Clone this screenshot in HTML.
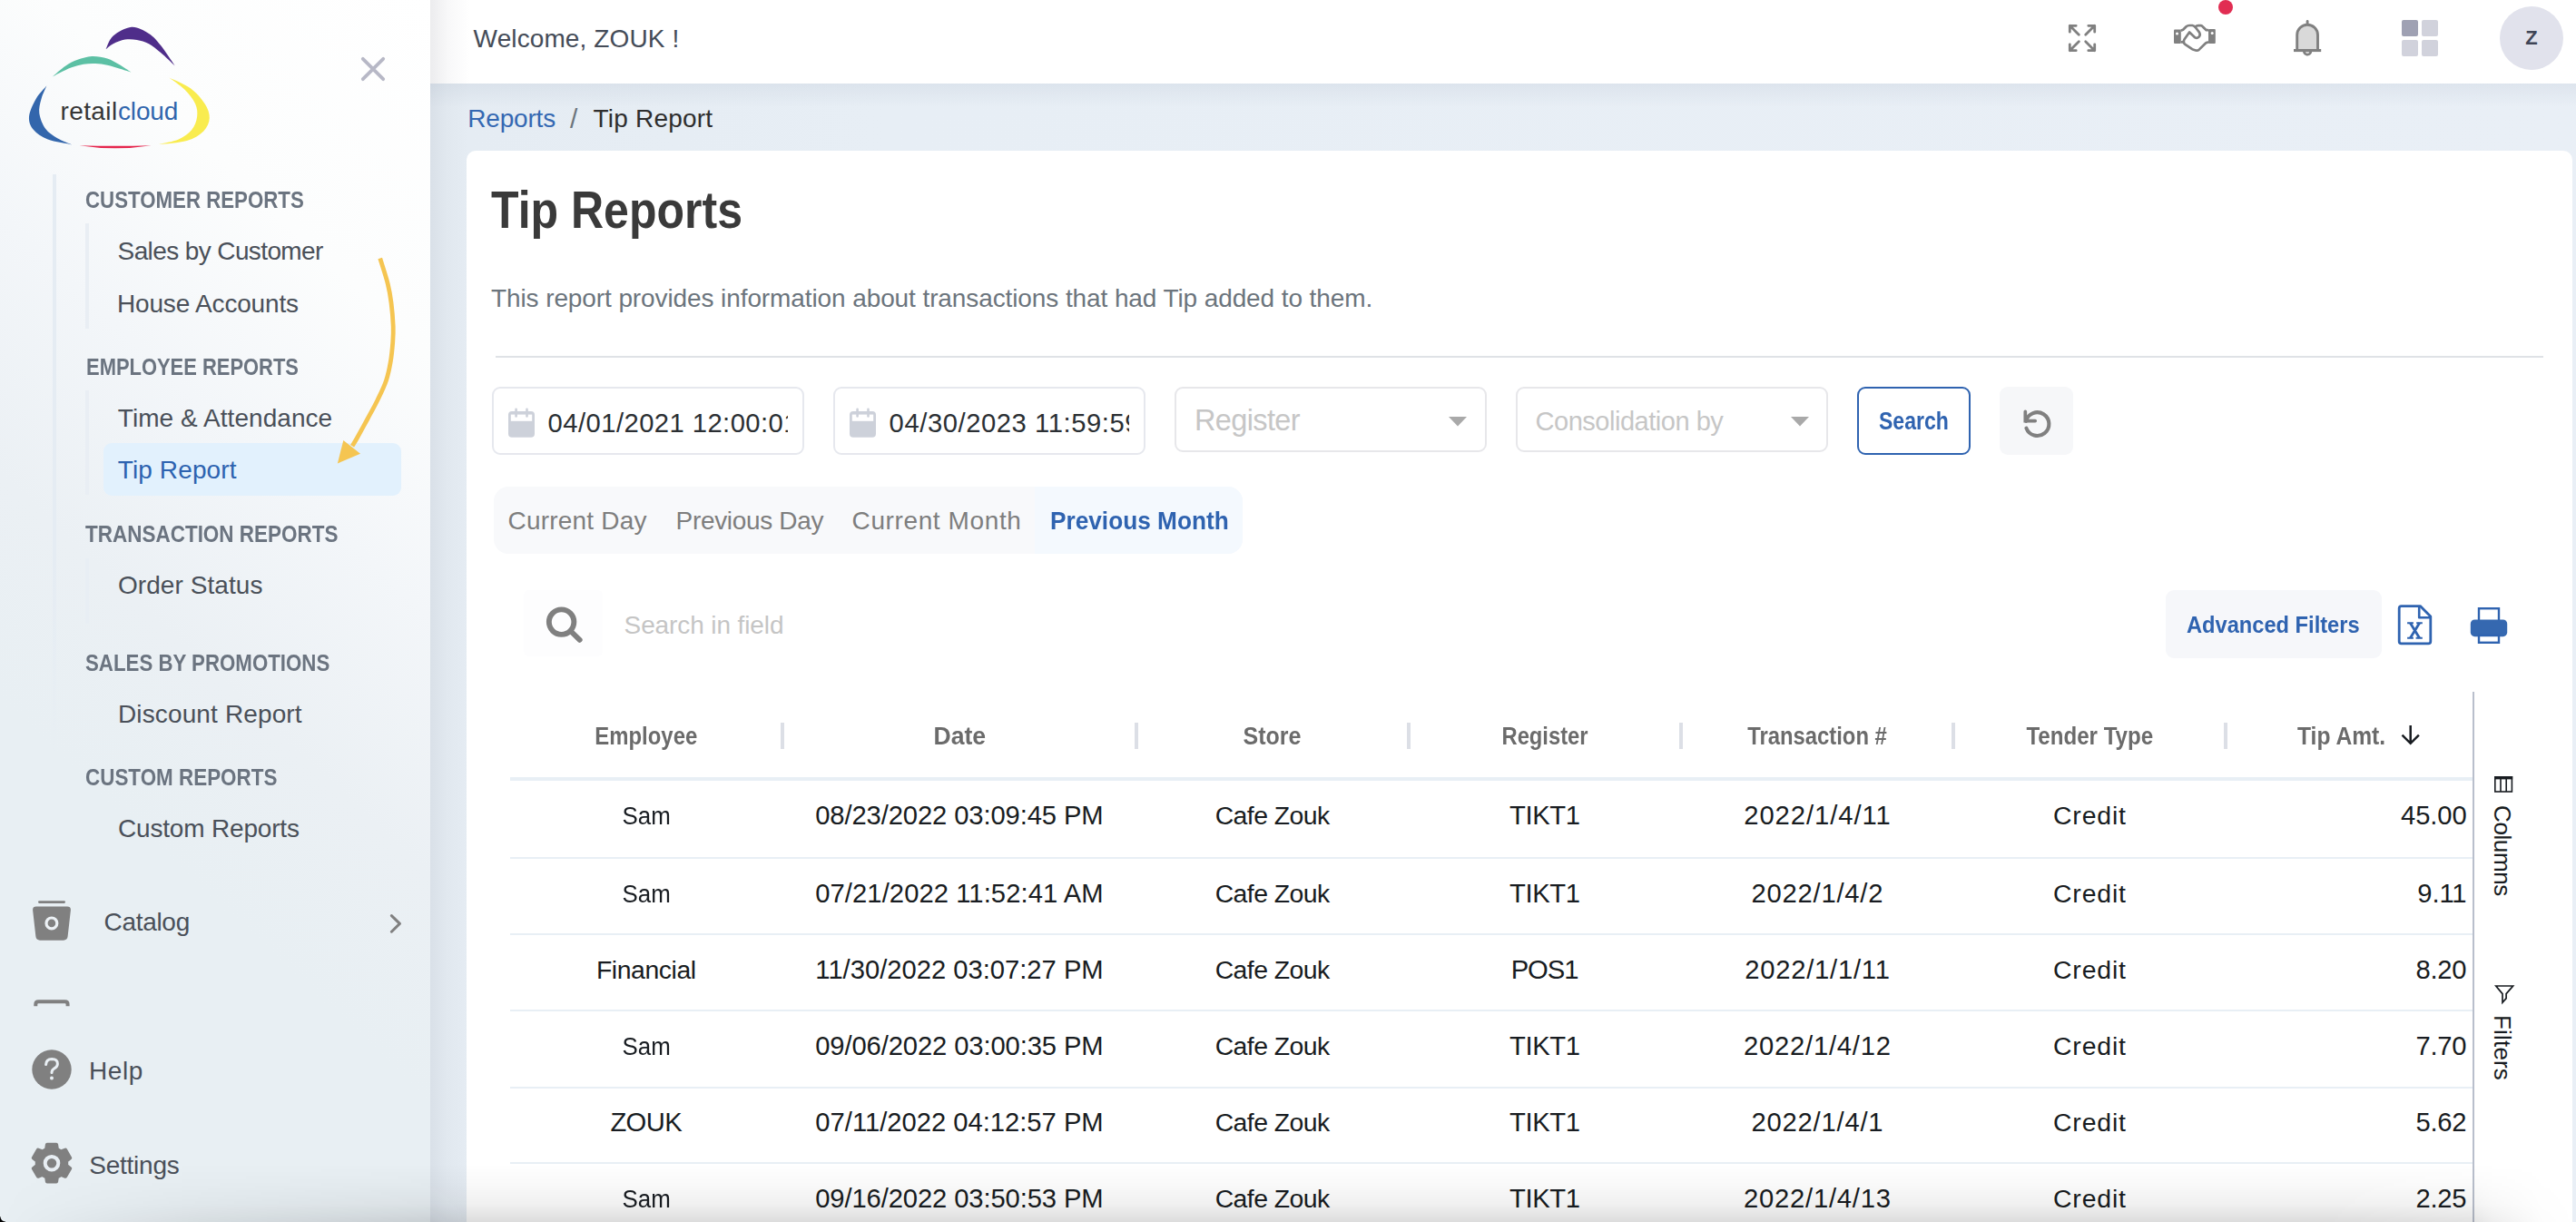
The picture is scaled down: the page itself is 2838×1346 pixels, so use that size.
<!DOCTYPE html>
<html lang="en">
<head>
<meta charset="utf-8">
<title>Tip Reports</title>
<style>
*{box-sizing:border-box;margin:0;padding:0}
html,body{width:2838px;height:1346px;overflow:hidden}
body{position:relative;font-family:"Liberation Sans",sans-serif;background:#e5ebf3;color:#181c21}
.t{position:absolute;white-space:nowrap;display:block}
.abs{position:absolute}
svg{position:absolute;display:block;overflow:visible}

/* ---------- main background / breadcrumb strip ---------- */
#main{position:absolute;left:474px;top:92px;width:2364px;height:1254px;
  background:linear-gradient(90deg,#d9e0e8 0,#e1e8ef 18px,#e5ecf3 42px,#e7eef5 500px,#e9eff6 100%)}
#main:before{content:"";position:absolute;left:0;top:0;width:100%;height:26px;
  background:linear-gradient(180deg,rgba(120,135,160,.10),rgba(120,135,160,0))}

/* ---------- top bar ---------- */
#top{position:absolute;left:474px;top:0;width:2364px;height:92px;background:#fff}
#top:before{content:"";position:absolute;left:0;top:0;width:44px;height:92px;
  background:linear-gradient(90deg,#ececee 0,#f8f8f9 45%,#fff 100%)}
.dot{position:absolute;left:1970px;top:0;width:16px;height:16px;border-radius:50%;background:#e12d52}
.avatar{position:absolute;left:2280px;top:7px;width:70px;height:70px;border-radius:50%;background:#e1e2ec}
.grid i{position:absolute;width:18px;height:18px;border-radius:2px;background:#d1d2dc}

/* ---------- sidebar ---------- */
#side{position:absolute;left:0;top:0;width:474px;height:1346px;
  background:linear-gradient(223deg,#ffffff 0%,#fcfdfd 22%,#f3f6f9 38%,#ebf0f4 54%,#e8eff3 68%,#e8eff3 100%)}
.vline{position:absolute;background:#e5ecf3}
.hl{position:absolute;left:114px;top:488.4px;width:328px;height:57.3px;border-radius:9px;background:#e2f1fd}

/* ---------- card ---------- */
#card{position:absolute;left:514px;top:166px;width:2320px;height:1300px;background:#fff;border-radius:10px}
.hr{position:absolute;left:32px;top:226px;width:2256px;height:2px;background:#dfe2e6}
.inp{position:absolute;top:260px;height:75px;border:2px solid #e6e8ee;border-radius:9px;background:#fff;overflow:hidden}
.sel{position:absolute;top:260px;height:72px;border:2px solid #e7e7ea;border-radius:9px;background:#fff}
.btn{position:absolute;left:1532px;top:260px;width:125px;height:75.4px;border:2px solid #2f63b0;border-radius:9px;background:#fff}
.rst{position:absolute;left:1689px;top:260px;width:81px;height:75.4px;border-radius:9px;background:#f6f7f9}
.tabs{position:absolute;left:30px;top:370px;width:825px;height:74px;border-radius:16px;background:#f8f9fb;overflow:hidden}
.tabs b{position:absolute;left:596px;top:0;width:229px;height:74px;background:#f4f9fe;display:block}
.sbox{position:absolute;left:63px;top:484px;width:87px;height:73px;background:#fdfdfe;border-radius:6px}
.adv{position:absolute;left:1872px;top:484px;width:238px;height:75px;border-radius:9px;background:#f6f7fa}

/* table */
.sep{position:absolute;top:630px;width:4px;height:29px;background:#dcdfe6}
.hb{position:absolute;left:48px;top:690px;width:2162px;height:4px;background:#e8eff5}
.rb{position:absolute;left:48px;width:2162px;height:2px;background:#e8eff5}
.sideline{position:absolute;left:2210px;top:596px;width:2px;height:760px;background:#b9bfcc}
.rot{position:absolute;transform-origin:0 0;transform:rotate(90deg);white-space:nowrap}

/* bottom shade */
#shade{position:absolute;left:0;top:1282px;width:2838px;height:64px;pointer-events:none;
  background:linear-gradient(180deg,rgba(0,0,0,0) 0,rgba(0,0,0,.022) 35%,rgba(0,0,0,.06) 70%,rgba(0,0,0,.135) 100%);
  -webkit-mask-image:linear-gradient(90deg,rgba(0,0,0,0) 0,rgba(0,0,0,.55) 220px,#000 520px,#000 2560px,rgba(0,0,0,.82) 2724px,rgba(0,0,0,.5) 2745px,rgba(0,0,0,.08) 2800px,rgba(0,0,0,0) 2838px);
  mask-image:linear-gradient(90deg,rgba(0,0,0,0) 0,rgba(0,0,0,.55) 220px,#000 520px,#000 2560px,rgba(0,0,0,.82) 2724px,rgba(0,0,0,.5) 2745px,rgba(0,0,0,.08) 2800px,rgba(0,0,0,0) 2838px)}
#corner{position:absolute;left:0;top:1340px;width:6px;height:6px;
  background:radial-gradient(circle at 100% 0,rgba(0,0,0,0) 0,rgba(0,0,0,0) 5px,#000 6px)}

</style>
</head>
<body>
<!-- ======================= MAIN BACKGROUND + BREADCRUMB ======================= -->
<div id="main">
  <nav class="crumb">
    <span class="t" style="top:22px;font-size:28px;line-height:33px;color:#3468b2;letter-spacing:-0.17px;left:41.2px;"><span>Reports</span></span>
    <span class="t" style="top:21px;font-size:30px;line-height:35px;color:#6c757d;left:154.0px;"><span>/</span></span>
    <span class="t" style="top:22px;font-size:28px;line-height:33px;color:#2e2e2e;letter-spacing:0.19px;left:179.6px;"><span>Tip Report</span></span>
  </nav>
</div>

<!-- ======================= TOP BAR ======================= -->
<header id="top">
  <span class="t" style="top:26px;font-size:28px;line-height:33px;color:#454c58;letter-spacing:0.11px;left:47.6px;"><span>Welcome, ZOUK !</span></span>

  <!-- fullscreen / expand -->
  <svg style="left:1805px;top:27px" width="30" height="30" viewBox="0 0 30 30" fill="none" stroke="#808080" stroke-width="2.8" stroke-linejoin="round" stroke-linecap="round">
    <path d="M1.3 8.2V1.3H8.2M1.3 1.3L11.3 11.3"/>
    <path d="M28.7 8.2V1.3H21.8M28.7 1.3L18.7 11.3"/>
    <path d="M1.3 21.8V28.7H8.2M1.3 28.7L11.3 18.7"/>
    <path d="M28.7 21.8V28.7H21.8M28.7 28.7L18.7 18.7"/>
  </svg>

  <!-- handshake -->
  <svg style="left:1921px;top:27px" width="46" height="30" viewBox="0 0 46 30" fill="none">
    <rect x="0" y="5.4" width="7.8" height="15.6" rx="1" fill="#808080"/>
    <rect x="38" y="5" width="7.8" height="16" rx="1" fill="#808080"/>
    <circle cx="3.5" cy="9.9" r="1.5" fill="#fff"/>
    <circle cx="42.2" cy="9.6" r="1.5" fill="#fff"/>
    <path d="M7.8 6.6 L10.1 5.8 L13.6 2.2 Q15 1 17 1 L20.4 1 Q22 1.3 23.3 2.5 Q25 1.2 27 1.2 L29.8 1.2 Q30.8 1.3 31.6 2.2 L35.7 6.2 L38 6.2" stroke="#808080" stroke-width="2.7" stroke-linejoin="round"/>
    <path d="M38 19.4 L35.3 20.2 L28 27.4 Q26.2 29 24 28.5 L20.2 27.2 L12 21.6 Q10.9 20.6 10.9 19.4 L7.8 19.4" stroke="#808080" stroke-width="2.7" stroke-linejoin="round"/>
    <path d="M23.3 2.5 L28 8.6 Q29.6 11.3 27.6 13.6 Q25.6 15.6 23.4 14.4 L17.1 8.5 L11.6 16.2 Q10.6 17.6 10.9 19.4" stroke="#808080" stroke-width="2.7" stroke-linejoin="round" stroke-linecap="round"/>
  </svg>
  <i class="dot"></i>

  <!-- bell -->
  <svg style="left:2052.9px;top:21.8px" width="31" height="41" viewBox="0 0 31 41">
    <path d="M10 34.5 A5.1 5.1 0 0 0 20.2 34.5 Z" fill="#808080"/>
    <path d="M12.9 34.8 A2.2 2.2 0 0 0 17.3 34.8 Z" fill="#dcdcdc"/>
    <path d="M3.7 33.5 V16.6 A11.4 11.4 0 0 1 26.5 16.6 V33.5 Z" fill="#d9d9d9" stroke="#808080" stroke-width="2.9"/>
    <path d="M15.1 1.4 V5" stroke="#808080" stroke-width="2.9" stroke-linecap="round"/>
    <rect x="0" y="32" width="30.2" height="3.1" fill="#808080"/>
  </svg>

  <!-- app grid -->
  <div class="grid">
    <i style="left:2171.9px;top:21.9px;background:#9fa1b3"></i>
    <i style="left:2194px;top:21.9px"></i>
    <i style="left:2171.9px;top:44px"></i>
    <i style="left:2194px;top:44px"></i>
  </div>

  <div class="avatar"></div>
  <span class="t" style="top:28px;font-size:22px;line-height:27px;color:#3f4556;font-weight:700;left:1815.0px;width:1000px;text-align:center;"><span>Z</span></span>
</header>

<!-- ======================= SIDEBAR ======================= -->
<aside id="side">
  <svg style="left:0;top:0" width="260" height="180" viewBox="0 0 260 180"><path d="M116.60,54.30 C117.95,51.85 119.97,43.68 124.70,39.60 C129.43,35.52 138.45,30.23 145.00,29.80 C151.55,29.37 158.65,33.62 164.00,37.00 C169.35,40.38 172.33,44.20 177.10,50.10 C181.87,56.00 190.02,68.68 192.60,72.40 L192.60,72.40 C190.02,70.00 181.87,62.03 177.10,58.00 C172.33,53.97 168.37,50.53 164.00,48.20 C159.63,45.87 155.27,44.77 150.90,44.00 C146.53,43.23 142.17,42.90 137.80,43.60 C133.43,44.30 128.23,46.42 124.70,48.20 C121.17,49.98 117.95,53.28 116.60,54.30 Z" fill="#4f2d8a"/><path d="M57.30,84.80 C59.82,82.73 67.70,75.57 72.40,72.40 C77.10,69.23 80.70,67.55 85.50,65.80 C90.30,64.05 95.75,62.12 101.20,61.90 C106.65,61.68 113.18,62.97 118.20,64.50 C123.22,66.03 126.93,68.58 131.30,71.10 C135.67,73.62 142.22,78.18 144.40,79.60 L144.40,79.60 C142.22,78.93 135.67,76.92 131.30,75.60 C126.93,74.28 122.57,72.62 118.20,71.70 C113.83,70.78 109.47,70.25 105.10,70.10 C100.73,69.95 96.37,70.10 92.00,70.80 C87.63,71.50 83.27,72.73 78.90,74.30 C74.53,75.87 69.40,78.45 65.80,80.20 C62.20,81.95 58.72,84.03 57.30,84.80 Z" fill="#5cc0a4"/><path d="M51.40,94.60 C49.43,97.00 42.83,103.32 39.60,109.00 C36.37,114.68 32.43,123.02 32.00,128.70 C31.57,134.38 33.55,138.95 37.00,143.10 C40.45,147.25 45.60,150.88 52.70,153.60 C59.80,156.32 75.12,158.43 79.60,159.40 L79.60,159.40 C76.87,158.20 68.12,155.13 63.20,152.20 C58.28,149.27 53.42,146.38 50.10,141.80 C46.78,137.22 44.07,130.17 43.30,124.70 C42.53,119.23 44.15,114.02 45.50,109.00 C46.85,103.98 50.42,97.00 51.40,94.60 Z" fill="#3366ac"/><path d="M186.30,85.50 C190.23,87.47 203.35,92.50 209.90,97.30 C216.45,102.10 222.12,108.85 225.60,114.30 C229.08,119.75 231.02,124.98 230.80,130.00 C230.58,135.02 228.45,140.25 224.30,144.40 C220.15,148.55 214.08,152.47 205.90,154.90 C197.72,157.33 180.32,158.32 175.20,159.00 L175.20,159.00 C178.80,158.10 190.80,156.25 196.80,153.60 C202.80,150.95 207.82,147.25 211.20,143.10 C214.58,138.95 216.45,133.50 217.10,128.70 C217.75,123.90 217.40,119.32 215.10,114.30 C212.80,109.28 208.10,103.40 203.30,98.60 C198.50,93.80 189.13,87.68 186.30,85.50 Z" fill="#f9ec4f"/><path d="M87.4,160.2 Q127,161.4 166.6,160.2 Q127,166.4 87.4,160.2 Z" fill="#e5254c"/></svg>
  <span class="t" style="top:106px;font-size:28px;line-height:33px;color:#363636;letter-spacing:0.43px;left:66.4px;"><span>retail</span></span>
  <span class="t" style="top:106px;font-size:28px;line-height:33px;color:#3166ad;letter-spacing:-0.15px;left:130.0px;"><span>cloud</span></span>

  <svg style="left:398px;top:63px" width="26" height="26" viewBox="0 0 26 26"><path d="M1.8 1.8L24.2 24.2M24.2 1.8L1.8 24.2" stroke="#b7b8c6" stroke-width="3.8" stroke-linecap="round"/></svg>

  <i class="vline" style="left:58.4px;top:192px;width:3.2px;height:640px;background:linear-gradient(180deg,#e5ecf3 0,#e5ecf3 420px,rgba(229,236,243,0) 100%)"></i>
  <i class="vline" style="left:94.3px;top:246px;width:3.6px;height:116px;background:#e9eef4"></i>
  <i class="vline" style="left:94.3px;top:430.4px;width:3.6px;height:115px;background:#e9eef4"></i>
  <i class="vline" style="left:94.3px;top:614.7px;width:3.6px;height:72.7px;background:#e8eef4"></i>
  <i class="hl"></i>

  <span class="t" style="top:204px;font-size:26px;line-height:32px;color:#6b7480;font-weight:700;left:93.6px;"><span style="display:inline-block;transform:scaleX(0.8562);transform-origin:0 50%">CUSTOMER REPORTS</span></span>
  <span class="t" style="top:260px;font-size:28px;line-height:33px;color:#4a5059;letter-spacing:-0.61px;left:129.6px;"><span>Sales by Customer</span></span>
  <span class="t" style="top:318px;font-size:28px;line-height:33px;color:#4a5059;letter-spacing:-0.18px;left:129.0px;"><span>House Accounts</span></span>
  <span class="t" style="top:388px;font-size:26px;line-height:32px;color:#6b7480;font-weight:700;left:94.5px;"><span style="display:inline-block;transform:scaleX(0.8434);transform-origin:0 50%">EMPLOYEE REPORTS</span></span>
  <span class="t" style="top:444px;font-size:28px;line-height:33px;color:#4a5059;letter-spacing:0.05px;left:129.8px;"><span>Time &amp; Attendance</span></span>
  <span class="t" style="top:501px;font-size:28px;line-height:33px;color:#2d63b0;letter-spacing:0.11px;left:129.8px;"><span>Tip Report</span></span>
  <span class="t" style="top:572px;font-size:26px;line-height:32px;color:#6b7480;font-weight:700;left:93.8px;"><span style="display:inline-block;transform:scaleX(0.8646);transform-origin:0 50%">TRANSACTION REPORTS</span></span>
  <span class="t" style="top:628px;font-size:28px;line-height:33px;color:#4a5059;letter-spacing:0.06px;left:130.0px;"><span>Order Status</span></span>
  <span class="t" style="top:714px;font-size:26px;line-height:32px;color:#6b7480;font-weight:700;left:94.1px;"><span style="display:inline-block;transform:scaleX(0.8563);transform-origin:0 50%">SALES BY PROMOTIONS</span></span>
  <span class="t" style="top:770px;font-size:28px;line-height:33px;color:#4a5059;letter-spacing:0.13px;left:130.0px;"><span>Discount Report</span></span>
  <span class="t" style="top:840px;font-size:26px;line-height:32px;color:#6b7480;font-weight:700;left:93.9px;"><span style="display:inline-block;transform:scaleX(0.8624);transform-origin:0 50%">CUSTOM REPORTS</span></span>
  <span class="t" style="top:896px;font-size:28px;line-height:33px;color:#4a5059;letter-spacing:-0.18px;left:130.0px;"><span>Custom Reports</span></span>

  <!-- annotation arrow -->
  <svg style="left:340px;top:270px" width="134" height="260" viewBox="340 270 134 260">
    <path d="M418.72,284.47 C420.14,289.15 425.18,304.33 427.23,312.55 C429.29,320.78 430.07,326.03 431.06,333.83 C432.06,341.63 432.91,352.27 433.19,359.36 C433.48,366.45 433.23,370.00 432.77,376.38 C432.30,382.77 431.63,390.57 430.43,397.66 C429.22,404.75 427.91,411.84 425.53,418.94 C423.16,426.03 419.61,433.12 416.17,440.21 C412.73,447.30 408.72,454.40 404.89,461.49 C401.06,468.58 395.99,477.80 393.19,482.77 C390.39,487.73 388.94,489.86 388.09,491.28" fill="none" stroke="#f5c551" stroke-width="4.8" stroke-linecap="butt"/>
    <path d="M371.9 510.4 L378.3 484.9 L397 499.8 Z" fill="#f5c551"/>
  </svg>

  <!-- catalog -->
  <svg style="left:30px;top:985px" width="60" height="60" viewBox="30 985 60 60">
    <path d="M43.3 993.6 H70.7" stroke="#808080" stroke-width="2.6" stroke-linecap="round"/>
    <path d="M40 998.6 H74 Q78.2 998.6 77.9 1002.6 L74.6 1031.6 Q74.2 1035.7 70 1035.7 H44 Q39.8 1035.7 39.4 1031.6 L36.1 1002.6 Q35.8 998.6 40 998.6 Z" fill="#808080"/>
    <circle cx="56.9" cy="1016.9" r="5.9" fill="none" stroke="#ecf1f5" stroke-width="3.2"/>
  </svg>
  <span class="t" style="top:999px;font-size:28px;line-height:33px;color:#4a5059;letter-spacing:-0.30px;left:114.5px;"><span>Catalog</span></span>
  <svg style="left:425px;top:1003px" width="24" height="30" viewBox="425 1003 24 30"><path d="M431.4 1008.6 L440.4 1017.4 L431.4 1026.2" fill="none" stroke="#808080" stroke-width="3" stroke-linecap="round" stroke-linejoin="round"/></svg>

  <!-- clipped next item icon -->
  <svg style="left:30px;top:1095px" width="60" height="14" viewBox="30 1095 60 14"><path d="M39.3 1108.2 V1106.2 Q39.3 1103.2 42.3 1103.2 H71.6 Q74.6 1103.2 74.6 1106.2 V1108.2" fill="none" stroke="#808080" stroke-width="4"/></svg>

  <!-- help -->
  <svg style="left:30px;top:1150px" width="60" height="56" viewBox="30 1150 60 56">
    <circle cx="57" cy="1178" r="21.7" fill="#808080"/>
    <path d="M50.6 1172.6 Q50.8 1166.4 57.2 1166.4 Q63.6 1166.6 63.4 1172 Q63.2 1175.4 59.4 1177.2 Q57 1178.6 57 1181.6" fill="none" stroke="#e9eff4" stroke-width="3.0" stroke-linecap="round"/>
    <circle cx="57" cy="1187.6" r="2.0" fill="#e9eff4"/>
  </svg>
  <span class="t" style="top:1163px;font-size:28px;line-height:33px;color:#4a5059;letter-spacing:0.55px;left:98.0px;"><span>Help</span></span>

  <!-- settings -->
  <svg style="left:30px;top:1253px" width="60" height="58" viewBox="30 1253 60 58">
    <path d="M51.12,1265.89 L51.88,1260.83 L62.12,1260.83 L62.88,1265.89 L67.32,1268.45 L72.08,1266.59 L77.20,1275.45 L73.20,1278.63 L73.20,1283.77 L77.20,1286.95 L72.08,1295.81 L67.32,1293.95 L62.88,1296.51 L62.12,1301.57 L51.88,1301.57 L51.12,1296.51 L46.68,1293.95 L41.92,1295.81 L36.80,1286.95 L40.80,1283.77 L40.80,1278.63 L36.80,1275.45 L41.92,1266.59 L46.68,1268.45 Z" fill="#808080" stroke="#808080" stroke-width="4" stroke-linejoin="round"/>
    <circle cx="57" cy="1281.2" r="7.3" fill="none" stroke="#e8eef3" stroke-width="4"/>
  </svg>
  <span class="t" style="top:1267px;font-size:28px;line-height:33px;color:#4a5059;letter-spacing:-0.22px;left:98.2px;"><span>Settings</span></span>
</aside>

<!-- ======================= CARD ======================= -->
<section id="card">
  <span class="t" style="top:32px;font-size:58px;line-height:66px;color:#3a3a3a;font-weight:700;left:26.6px;"><span style="display:inline-block;transform:scaleX(0.8624);transform-origin:0 50%">Tip Reports</span></span>
  <span class="t" style="top:146px;font-size:28px;line-height:33px;color:#6c757d;letter-spacing:-0.10px;left:27.0px;"><span>This report provides information about transactions that had Tip added to them.</span></span>
  <i class="hr"></i>

  <!-- date from -->
  <div class="inp" style="left:28px;width:344px">
    <svg style="left:16px;top:22px" width="30" height="33" viewBox="0 0 30 33">
      <rect x="0" y="3.1" width="29" height="28.6" rx="4" fill="#cdd1da"/>
      <rect x="2.8" y="6.6" width="23.4" height="7.2" fill="#fff"/>
      <path d="M8.6 0.8 V8.4 M20.5 0.8 V8.4" stroke="#cdd1da" stroke-width="2.6" stroke-linecap="round"/>
    </svg>
    <div class="abs" style="left:58px;top:0;width:266px;height:72px;overflow:hidden">
      <span class="t" style="top:21px;font-size:29.2px;line-height:34px;color:#2b2f33;letter-spacing:0.45px;left:1.6px;"><span>04/01/2021 12:00:01</span></span>
    </div>
  </div>
  <!-- date to -->
  <div class="inp" style="left:404px;width:344px">
    <svg style="left:16px;top:22px" width="30" height="33" viewBox="0 0 30 33">
      <rect x="0" y="3.1" width="29" height="28.6" rx="4" fill="#cdd1da"/>
      <rect x="2.8" y="6.6" width="23.4" height="7.2" fill="#fff"/>
      <path d="M8.6 0.8 V8.4 M20.5 0.8 V8.4" stroke="#cdd1da" stroke-width="2.6" stroke-linecap="round"/>
    </svg>
    <div class="abs" style="left:58px;top:0;width:266px;height:72px;overflow:hidden">
      <span class="t" style="top:21px;font-size:29.2px;line-height:34px;color:#2b2f33;letter-spacing:0.57px;left:1.6px;"><span>04/30/2023 11:59:59</span></span>
    </div>
  </div>

  <!-- register select -->
  <div class="sel" style="left:780px;width:343.5px">
    <span class="t" style="top:16px;font-size:32.5px;line-height:38px;color:#c6c6c6;letter-spacing:-0.63px;left:20.0px;"><span>Register</span></span>
    <svg style="left:300.4px;top:30.9px" width="20" height="11" viewBox="0 0 20 11"><path d="M0 0 H20 L10 10.4 Z" fill="#a9a9a9"/></svg>
  </div>
  <!-- consolidation select -->
  <div class="sel" style="left:1155.5px;width:344px">
    <span class="t" style="top:19px;font-size:29px;line-height:34px;color:#c6c6c6;letter-spacing:-0.47px;left:20.0px;"><span>Consolidation by</span></span>
    <svg style="left:301.4px;top:30.9px" width="20" height="11" viewBox="0 0 20 11"><path d="M0 0 H20 L10 10.4 Z" fill="#a9a9a9"/></svg>
  </div>

  <div class="btn"><span class="t" style="top:20px;font-size:27px;line-height:32px;color:#2f63b0;font-weight:700;left:22.0px;"><span style="display:inline-block;transform:scaleX(0.8532);transform-origin:0 50%">Search</span></span></div>
  <div class="rst">
    <svg style="left:0.8px;top:0.3px" width="81" height="75" viewBox="0 0 81 75" fill="none" stroke="#808080" stroke-width="4.1">
      <path d="M28.0 37.8 A12.9 12.9 0 1 1 28.4 45.6" stroke-linecap="round"/>
      <path d="M27.3 27.4 V37.6 H38.2" stroke-linecap="round" stroke-linejoin="miter" stroke-width="3.7"/>
    </svg>
  </div>

  <!-- quick ranges -->
  <div class="tabs"><b></b>
    <span class="t" style="top:21px;font-size:28px;line-height:33px;color:#7e7e7e;letter-spacing:0.19px;left:15.6px;"><span>Current Day</span></span>
    <span class="t" style="top:21px;font-size:28px;line-height:33px;color:#7e7e7e;letter-spacing:-0.33px;left:200.6px;"><span>Previous Day</span></span>
    <span class="t" style="top:21px;font-size:28px;line-height:33px;color:#7e7e7e;letter-spacing:0.61px;left:394.6px;"><span>Current Month</span></span>
    <span class="t" style="top:21px;font-size:28px;line-height:33px;color:#2f63b0;font-weight:700;left:612.6px;"><span style="display:inline-block;transform:scaleX(0.9366);transform-origin:0 50%">Previous Month</span></span>
  </div>

  <!-- quick search -->
  <div class="sbox"></div>
  <svg style="left:84px;top:498px" width="46" height="46" viewBox="598 664 46 46" fill="none" stroke="#808080">
    <circle cx="618.6" cy="685.1" r="13.75" stroke-width="5.9"/>
    <path d="M628.6 695 L638.7 704.8" stroke-width="5.9" stroke-linecap="round"/>
  </svg>
  <span class="t" style="top:506px;font-size:28px;line-height:33px;color:#c5c5c5;letter-spacing:-0.11px;left:173.6px;"><span>Search in field</span></span>

  <div class="adv"><span class="t" style="top:22px;font-size:26px;line-height:32px;color:#2f63b0;font-weight:700;left:23.0px;"><span style="display:inline-block;transform:scaleX(0.9097);transform-origin:0 50%">Advanced Filters</span></span></div>

  <!-- excel export -->
  <svg style="left:2126px;top:498px" width="42" height="48" viewBox="2640 664 42 48" fill="none">
    <path d="M2645.6 667.6 H2666.4 L2677.8 679 V706.4 Q2677.8 708.8 2675.4 708.8 H2645.6 Q2643.2 708.8 2643.2 706.4 V670 Q2643.2 667.6 2645.6 667.6 Z" stroke="#2f63b0" stroke-width="2.8" stroke-linejoin="round"/>
    <path d="M2665.2 668.4 V680.2 H2677" stroke="#2f63b0" stroke-width="2.6" stroke-linejoin="round"/>
    <path d="M2655.4 686.3 L2665.6 702.8 M2665.6 686.3 L2655.4 702.8" stroke="#2f63b0" stroke-width="2.8"/>
    <path d="M2652.1 686.3 H2658.9 M2662.2 686.3 H2668.8 M2652.1 702.8 H2658.9 M2661.6 702.8 H2668.8" stroke="#2f63b0" stroke-width="2.1"/>
  </svg>
  <!-- print -->
  <svg style="left:2204px;top:500px" width="48" height="44" viewBox="2718 666 48 44" fill="none">
    <rect x="2731" y="670.2" width="22" height="14" stroke="#2f63b0" stroke-width="2.4"/>
    <rect x="2721.8" y="682.4" width="40.4" height="18.8" rx="4.6" fill="#3568b0"/>
    <rect x="2731" y="700" width="22" height="7.8" stroke="#2f63b0" stroke-width="2.4" fill="#fff"/>
  </svg>

  <!-- ================= grid ================= -->
  <span class="t" style="top:629px;font-size:27px;line-height:32px;color:#6b6b6b;font-weight:700;left:-302.0px;width:1000px;text-align:center;"><span style="display:inline-block;transform:scaleX(0.8851);transform-origin:50% 50%">Employee</span></span>
  <span class="t" style="top:629px;font-size:27px;line-height:32px;color:#6b6b6b;font-weight:700;left:43.0px;width:1000px;text-align:center;"><span style="display:inline-block;transform:scaleX(0.9845);transform-origin:50% 50%">Date</span></span>
  <span class="t" style="top:629px;font-size:27px;line-height:32px;color:#6b6b6b;font-weight:700;left:388.0px;width:1000px;text-align:center;"><span style="display:inline-block;transform:scaleX(0.9272);transform-origin:50% 50%">Store</span></span>
  <span class="t" style="top:629px;font-size:27px;line-height:32px;color:#6b6b6b;font-weight:700;left:688.0px;width:1000px;text-align:center;"><span style="display:inline-block;transform:scaleX(0.8802);transform-origin:50% 50%">Register</span></span>
  <span class="t" style="top:629px;font-size:27px;line-height:32px;color:#6b6b6b;font-weight:700;left:988.0px;width:1000px;text-align:center;"><span style="display:inline-block;transform:scaleX(0.8830);transform-origin:50% 50%">Transaction #</span></span>
  <span class="t" style="top:629px;font-size:27px;line-height:32px;color:#6b6b6b;font-weight:700;left:1288.0px;width:1000px;text-align:center;"><span style="display:inline-block;transform:scaleX(0.8927);transform-origin:50% 50%">Tender Type</span></span>
  <span class="t" style="top:629px;font-size:27px;line-height:32px;color:#6b6b6b;font-weight:700;left:2017.0px;"><span style="display:inline-block;transform:scaleX(0.9124);transform-origin:0 50%">Tip Amt.</span></span>
  <svg style="left:2128px;top:630px" width="28" height="28" viewBox="2642 796 28 28" fill="none" stroke="#181c21" stroke-width="2.5"><path d="M2655.7 799 V819 M2646.5 809.6 L2655.7 818.8 L2664.9 809.6"/></svg>

  <i class="sep" style="left:345.5px"></i>
  <i class="sep" style="left:736px"></i>
  <i class="sep" style="left:1036px"></i>
  <i class="sep" style="left:1336px"></i>
  <i class="sep" style="left:1636px"></i>
  <i class="sep" style="left:1936px"></i>
  <i class="hb"></i>

  <span class="t" style="top:715px;font-size:28.4px;line-height:34px;color:#181c21;left:-302.0px;width:1000px;text-align:center;"><span style="display:inline-block;transform:scaleX(0.9124);transform-origin:50% 50%">Sam</span></span>
<span class="t" style="top:715px;font-size:29.2px;line-height:34px;color:#181c21;letter-spacing:-0.11px;left:42.9px;width:1000px;text-align:center;"><span>08/23/2022 03:09:45 PM</span></span>
<span class="t" style="top:715px;font-size:28.4px;line-height:34px;color:#181c21;letter-spacing:-0.55px;left:387.7px;width:1000px;text-align:center;"><span>Cafe Zouk</span></span>
<span class="t" style="top:715px;font-size:29.2px;line-height:34px;color:#181c21;letter-spacing:-0.36px;left:687.8px;width:1000px;text-align:center;"><span>TIKT1</span></span>
<span class="t" style="top:715px;font-size:29.2px;line-height:34px;color:#181c21;letter-spacing:0.95px;left:988.5px;width:1000px;text-align:center;"><span>2022/1/4/11</span></span>
<span class="t" style="top:715px;font-size:28.4px;line-height:34px;color:#181c21;letter-spacing:0.83px;left:1288.4px;width:1000px;text-align:center;"><span>Credit</span></span>
<span class="t" style="top:715px;font-size:29.2px;line-height:34px;color:#181c21;letter-spacing:-0.13px;left:1203.5px;width:1000px;text-align:right;"><span>45.00</span></span>
<div class="rb" style="top:778.0px"></div>
<span class="t" style="top:801px;font-size:28.4px;line-height:34px;color:#181c21;left:-302.0px;width:1000px;text-align:center;"><span style="display:inline-block;transform:scaleX(0.9124);transform-origin:50% 50%">Sam</span></span>
<span class="t" style="top:801px;font-size:29.2px;line-height:34px;color:#181c21;letter-spacing:0.07px;left:43.0px;width:1000px;text-align:center;"><span>07/21/2022 11:52:41 AM</span></span>
<span class="t" style="top:801px;font-size:28.4px;line-height:34px;color:#181c21;letter-spacing:-0.55px;left:387.7px;width:1000px;text-align:center;"><span>Cafe Zouk</span></span>
<span class="t" style="top:801px;font-size:29.2px;line-height:34px;color:#181c21;letter-spacing:-0.36px;left:687.8px;width:1000px;text-align:center;"><span>TIKT1</span></span>
<span class="t" style="top:801px;font-size:29.2px;line-height:34px;color:#181c21;letter-spacing:0.76px;left:988.4px;width:1000px;text-align:center;"><span>2022/1/4/2</span></span>
<span class="t" style="top:801px;font-size:28.4px;line-height:34px;color:#181c21;letter-spacing:0.83px;left:1288.4px;width:1000px;text-align:center;"><span>Credit</span></span>
<span class="t" style="top:801px;font-size:29.2px;line-height:34px;color:#181c21;letter-spacing:-0.10px;left:1203.5px;width:1000px;text-align:right;"><span>9.11</span></span>
<div class="rb" style="top:862.3px"></div>
<span class="t" style="top:885px;font-size:28.4px;line-height:34px;color:#181c21;letter-spacing:-0.42px;left:-302.2px;width:1000px;text-align:center;"><span>Financial</span></span>
<span class="t" style="top:885px;font-size:29.2px;line-height:34px;color:#181c21;letter-spacing:-0.01px;left:43.0px;width:1000px;text-align:center;"><span>11/30/2022 03:07:27 PM</span></span>
<span class="t" style="top:885px;font-size:28.4px;line-height:34px;color:#181c21;letter-spacing:-0.55px;left:387.7px;width:1000px;text-align:center;"><span>Cafe Zouk</span></span>
<span class="t" style="top:885px;font-size:29.2px;line-height:34px;color:#181c21;letter-spacing:-1.04px;left:687.5px;width:1000px;text-align:center;"><span>POS1</span></span>
<span class="t" style="top:885px;font-size:29.2px;line-height:34px;color:#181c21;letter-spacing:0.77px;left:988.4px;width:1000px;text-align:center;"><span>2022/1/1/11</span></span>
<span class="t" style="top:885px;font-size:28.4px;line-height:34px;color:#181c21;letter-spacing:0.83px;left:1288.4px;width:1000px;text-align:center;"><span>Credit</span></span>
<span class="t" style="top:885px;font-size:29.2px;line-height:34px;color:#181c21;letter-spacing:-0.26px;left:1203.3px;width:1000px;text-align:right;"><span>8.20</span></span>
<div class="rb" style="top:946.3px"></div>
<span class="t" style="top:969px;font-size:28.4px;line-height:34px;color:#181c21;left:-302.0px;width:1000px;text-align:center;"><span style="display:inline-block;transform:scaleX(0.9124);transform-origin:50% 50%">Sam</span></span>
<span class="t" style="top:969px;font-size:29.2px;line-height:34px;color:#181c21;letter-spacing:-0.11px;left:42.9px;width:1000px;text-align:center;"><span>09/06/2022 03:00:35 PM</span></span>
<span class="t" style="top:969px;font-size:28.4px;line-height:34px;color:#181c21;letter-spacing:-0.55px;left:387.7px;width:1000px;text-align:center;"><span>Cafe Zouk</span></span>
<span class="t" style="top:969px;font-size:29.2px;line-height:34px;color:#181c21;letter-spacing:-0.36px;left:687.8px;width:1000px;text-align:center;"><span>TIKT1</span></span>
<span class="t" style="top:969px;font-size:29.2px;line-height:34px;color:#181c21;letter-spacing:0.77px;left:988.4px;width:1000px;text-align:center;"><span>2022/1/4/12</span></span>
<span class="t" style="top:969px;font-size:28.4px;line-height:34px;color:#181c21;letter-spacing:0.83px;left:1288.4px;width:1000px;text-align:center;"><span>Credit</span></span>
<span class="t" style="top:969px;font-size:29.2px;line-height:34px;color:#181c21;letter-spacing:-0.26px;left:1203.3px;width:1000px;text-align:right;"><span>7.70</span></span>
<div class="rb" style="top:1030.5px"></div>
<span class="t" style="top:1053px;font-size:29.2px;line-height:34px;color:#181c21;letter-spacing:-0.61px;left:-302.3px;width:1000px;text-align:center;"><span>ZOUK</span></span>
<span class="t" style="top:1053px;font-size:29.2px;line-height:34px;color:#181c21;letter-spacing:-0.01px;left:43.0px;width:1000px;text-align:center;"><span>07/11/2022 04:12:57 PM</span></span>
<span class="t" style="top:1053px;font-size:28.4px;line-height:34px;color:#181c21;letter-spacing:-0.55px;left:387.7px;width:1000px;text-align:center;"><span>Cafe Zouk</span></span>
<span class="t" style="top:1053px;font-size:29.2px;line-height:34px;color:#181c21;letter-spacing:-0.36px;left:687.8px;width:1000px;text-align:center;"><span>TIKT1</span></span>
<span class="t" style="top:1053px;font-size:29.2px;line-height:34px;color:#181c21;letter-spacing:0.80px;left:988.4px;width:1000px;text-align:center;"><span>2022/1/4/1</span></span>
<span class="t" style="top:1053px;font-size:28.4px;line-height:34px;color:#181c21;letter-spacing:0.83px;left:1288.4px;width:1000px;text-align:center;"><span>Credit</span></span>
<span class="t" style="top:1053px;font-size:29.2px;line-height:34px;color:#181c21;letter-spacing:-0.26px;left:1203.3px;width:1000px;text-align:right;"><span>5.62</span></span>
<div class="rb" style="top:1114.4px"></div>
<span class="t" style="top:1137px;font-size:28.4px;line-height:34px;color:#181c21;left:-302.0px;width:1000px;text-align:center;"><span style="display:inline-block;transform:scaleX(0.9124);transform-origin:50% 50%">Sam</span></span>
<span class="t" style="top:1137px;font-size:29.2px;line-height:34px;color:#181c21;letter-spacing:-0.11px;left:42.9px;width:1000px;text-align:center;"><span>09/16/2022 03:50:53 PM</span></span>
<span class="t" style="top:1137px;font-size:28.4px;line-height:34px;color:#181c21;letter-spacing:-0.55px;left:387.7px;width:1000px;text-align:center;"><span>Cafe Zouk</span></span>
<span class="t" style="top:1137px;font-size:29.2px;line-height:34px;color:#181c21;letter-spacing:-0.36px;left:687.8px;width:1000px;text-align:center;"><span>TIKT1</span></span>
<span class="t" style="top:1137px;font-size:29.2px;line-height:34px;color:#181c21;letter-spacing:0.77px;left:988.4px;width:1000px;text-align:center;"><span>2022/1/4/13</span></span>
<span class="t" style="top:1137px;font-size:28.4px;line-height:34px;color:#181c21;letter-spacing:0.83px;left:1288.4px;width:1000px;text-align:center;"><span>Credit</span></span>
<span class="t" style="top:1137px;font-size:29.2px;line-height:34px;color:#181c21;letter-spacing:-0.26px;left:1203.3px;width:1000px;text-align:right;"><span>2.25</span></span>

  <i class="sideline"></i>

  <!-- side tool panel -->
  <svg style="left:2234px;top:689px" width="21" height="18" viewBox="0 0 21 18" fill="none" stroke="#181c21">
    <rect x="0.8" y="0.8" width="18.6" height="16.2" stroke-width="1.6"/>
    <path d="M0 1.7 H20.2" stroke-width="3.4"/>
    <path d="M7 1 V17 M13.2 1 V17" stroke-width="1.6"/>
  </svg>
  <span class="rot" style="left:2259.3px;top:720.6px;font-size:26px;line-height:32px;color:#181c21"><span class="t" style="top:0px;font-size:26px;line-height:32px;color:#181c21;letter-spacing:-0.39px;left:0.0px;position:static;display:inline;"><span>Columns</span></span></span>
  <svg style="left:2234px;top:918px" width="24" height="24" viewBox="0 0 24 24" fill="none" stroke="#181c21" stroke-width="1.7" stroke-linejoin="miter"><path d="M1.8 2 H20.6 L13.1 10.6 V15.6 L9 20.2 V10.6 Z"/></svg>
  <span class="rot" style="left:2259.3px;top:951.6px;font-size:26px;line-height:32px;color:#181c21"><span class="t" style="top:0px;font-size:26px;line-height:32px;color:#181c21;letter-spacing:0.18px;left:0.0px;position:static;display:inline;"><span>Filters</span></span></span>
</section>

<!-- bottom fade (window edge shadow in the capture) -->
<div id="shade"></div>
<div id="corner"></div>

</body>
</html>
